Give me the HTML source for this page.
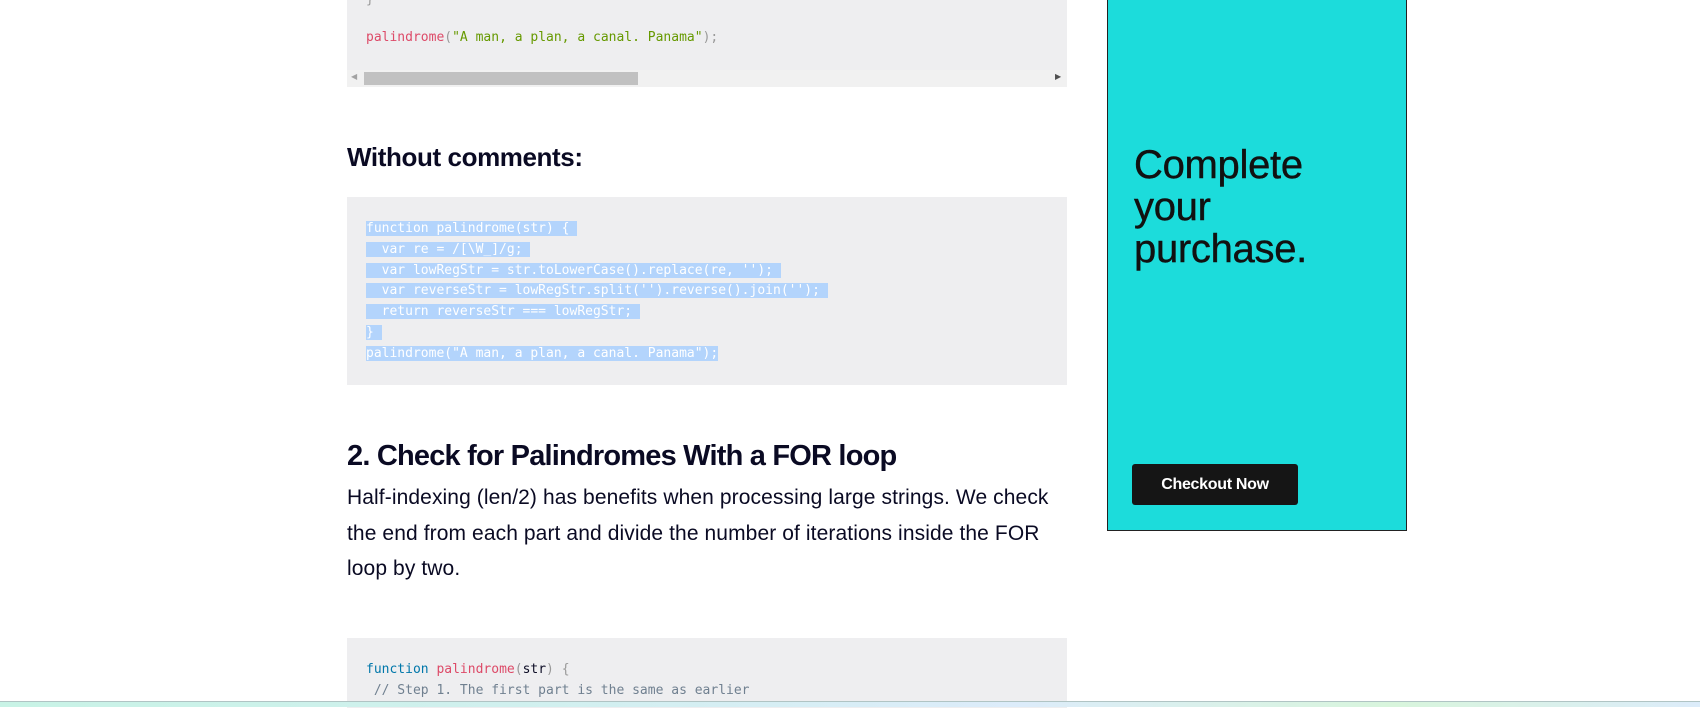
<!DOCTYPE html>
<html><head><meta charset="utf-8"><style>
*{margin:0;padding:0;box-sizing:border-box}
body{width:1700px;height:707px;overflow:hidden;background:#fff;position:relative;font-family:"Liberation Sans",sans-serif;color:#0a0a23}
.abs{position:absolute;white-space:pre}
.code{position:absolute;left:347px;width:720px;background:#eeeef0}
.mono{font-family:"DejaVu Sans Mono","Liberation Mono",monospace;font-size:13px;letter-spacing:0}
.sel{background:#b3d4fc;color:#fff}
</style></head><body>
<div class="code" style="top:0;height:87px"></div>
<div class="abs mono" style="left:366px;top:-8px;color:#999">}</div>
<div class="abs mono" style="left:366px;top:30px"><span style="color:#dd4a68">palindrome</span><span style="color:#999">(</span><span style="color:#690">"A man, a plan, a canal. Panama"</span><span style="color:#999">);</span></div>
<div style="position:absolute;left:347px;top:70px;width:720px;height:17px;background:#f1f1f1"></div>
<div style="position:absolute;left:364px;top:72px;width:274px;height:13px;background:#c1c1c1"></div>
<div class="abs" style="left:351px;top:72px;font-size:8px;color:#a3a3a3">◀</div>
<div class="abs" style="left:1055px;top:72px;font-size:8px;color:#505050">▶</div>

<div class="abs" style="left:347px;top:142px;font-size:26px;font-weight:bold;letter-spacing:-0.4px">Without comments:</div>

<div class="code" style="top:197px;height:188px"></div>
<div class="abs mono" style="left:366px;top:219px;line-height:20.8px"><span class="sel">function palindrome(str) { </span>
<span class="sel">  var re = /[\W_]/g; </span>
<span class="sel">  var lowRegStr = str.toLowerCase().replace(re, ''); </span>
<span class="sel">  var reverseStr = lowRegStr.split('').reverse().join(''); </span>
<span class="sel">  return reverseStr === lowRegStr; </span>
<span class="sel">} </span>
<span class="sel">palindrome("A man, a plan, a canal. Panama");</span></div>

<div class="abs" style="left:347px;top:440px;font-size:29px;font-weight:bold;letter-spacing:-0.8px">2. Check for Palindromes With a FOR loop</div>
<div class="abs" style="left:347px;top:480px;font-size:21px;line-height:35.5px;letter-spacing:0.1px">Half-indexing (len/2) has benefits when processing large strings. We check
the end from each part and divide the number of iterations inside the FOR
loop by two.</div>

<div class="code" style="top:638px;height:70px"></div>
<div class="abs mono" style="left:366px;top:659px;line-height:21px"><span style="color:#07a">function</span> <span style="color:#dd4a68">palindrome</span><span style="color:#999">(</span>str<span style="color:#999">) {</span>
<span style="color:#708090"> // Step 1. The first part is the same as earlier</span></div>

<div style="position:absolute;left:1107px;top:-2px;width:300px;height:533px;background:#1cdcdb;border:1px solid #222"></div>
<div class="abs" style="left:1134px;top:144px;font-size:40px;line-height:42px;color:#111;letter-spacing:-0.3px;-webkit-text-stroke:0.4px #111">Complete
your
purchase.</div>
<div style="position:absolute;left:1132px;top:464px;width:166px;height:41px;background:#151515;border-radius:3px;color:#fff;font-weight:bold;font-size:16px;line-height:41px;text-align:center;letter-spacing:-0.3px">Checkout Now</div>

<div style="position:absolute;left:0;top:701px;width:1700px;height:6px;background:linear-gradient(90deg,#c8f3e6,#d0f0ee 30%,#dcecfa 60%,#d8f5dc 82%,#dcecfa);border-top:1px solid #b0c4c4"></div>
</body></html>
